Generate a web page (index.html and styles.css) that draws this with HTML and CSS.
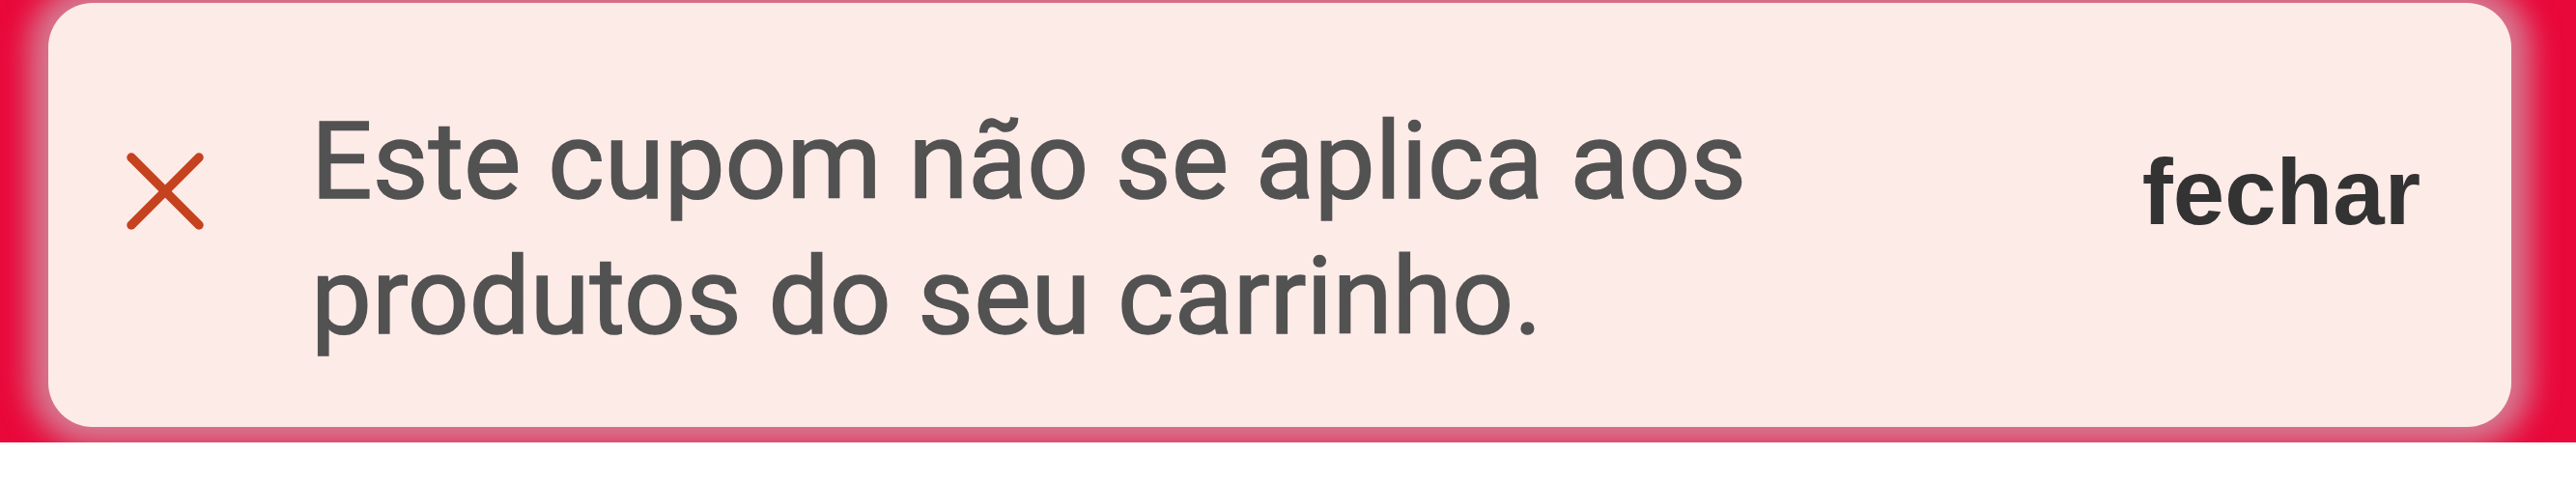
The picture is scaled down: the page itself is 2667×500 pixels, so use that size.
FILE: index.html
```html
<!DOCTYPE html>
<html lang="pt-BR">
<head>
    <meta charset="UTF-8">
    <meta name="viewport" content="width=device-width, initial-scale=1.0">
    <title>Cupom</title>
    <link rel="stylesheet" href="styles.css">
</head>
<body>
    <div class="banner">
        <div class="alert">
            <svg class="alert-icon" viewBox="0 0 80 80" aria-hidden="true">
                <line x1="5" y1="5" x2="75" y2="75" />
                <line x1="75" y1="5" x2="5" y2="75" />
            </svg>
            <p class="alert-text">Este cupom não se aplica aos produtos do seu carrinho.</p>
            <button class="close-btn">fechar</button>
        </div>
    </div>
</body>
</html>
```

FILE: styles.css
```css
body {
    margin: 0;
    background-color: #fff;
}

.banner {
    padding: 3px 67px 16px 50px;
    background-color: #e9083a;
    box-shadow: 0 18px 36px -6px rgba(0, 0, 0, 0.09);
}

.alert {
    display: flex;
    align-items: flex-start;
    padding: 94px 94px 65px 81px;
    background-color: #fdebe8;
    border-radius: 46px;
    box-shadow: 0 0 30px 20px rgba(200, 200, 205, 0.6);
}

.alert-icon {
    flex-shrink: 0;
    width: 80px;
    height: 80px;
    margin-top: 61px;
    stroke: #c4421e;
    stroke-width: 9.5;
    stroke-linecap: round;
}

.alert-text {
    flex: 1;
    max-width: 1580px;
    margin: 0 0 0 111px;
    font-family: Roboto, sans-serif;
    font-size: 112px;
    line-height: 140px;
    color: #525252;
    -webkit-text-stroke: 1.5px #525252;
}

.close-btn {
    margin: 47px 0 0 auto;
    padding: 0;
    background: none;
    border: none;
    font-family: "Liberation Sans", Arial, sans-serif;
    font-size: 96px;
    font-weight: bold;
    line-height: 110px;
    color: #333;
    cursor: pointer;
}
```
